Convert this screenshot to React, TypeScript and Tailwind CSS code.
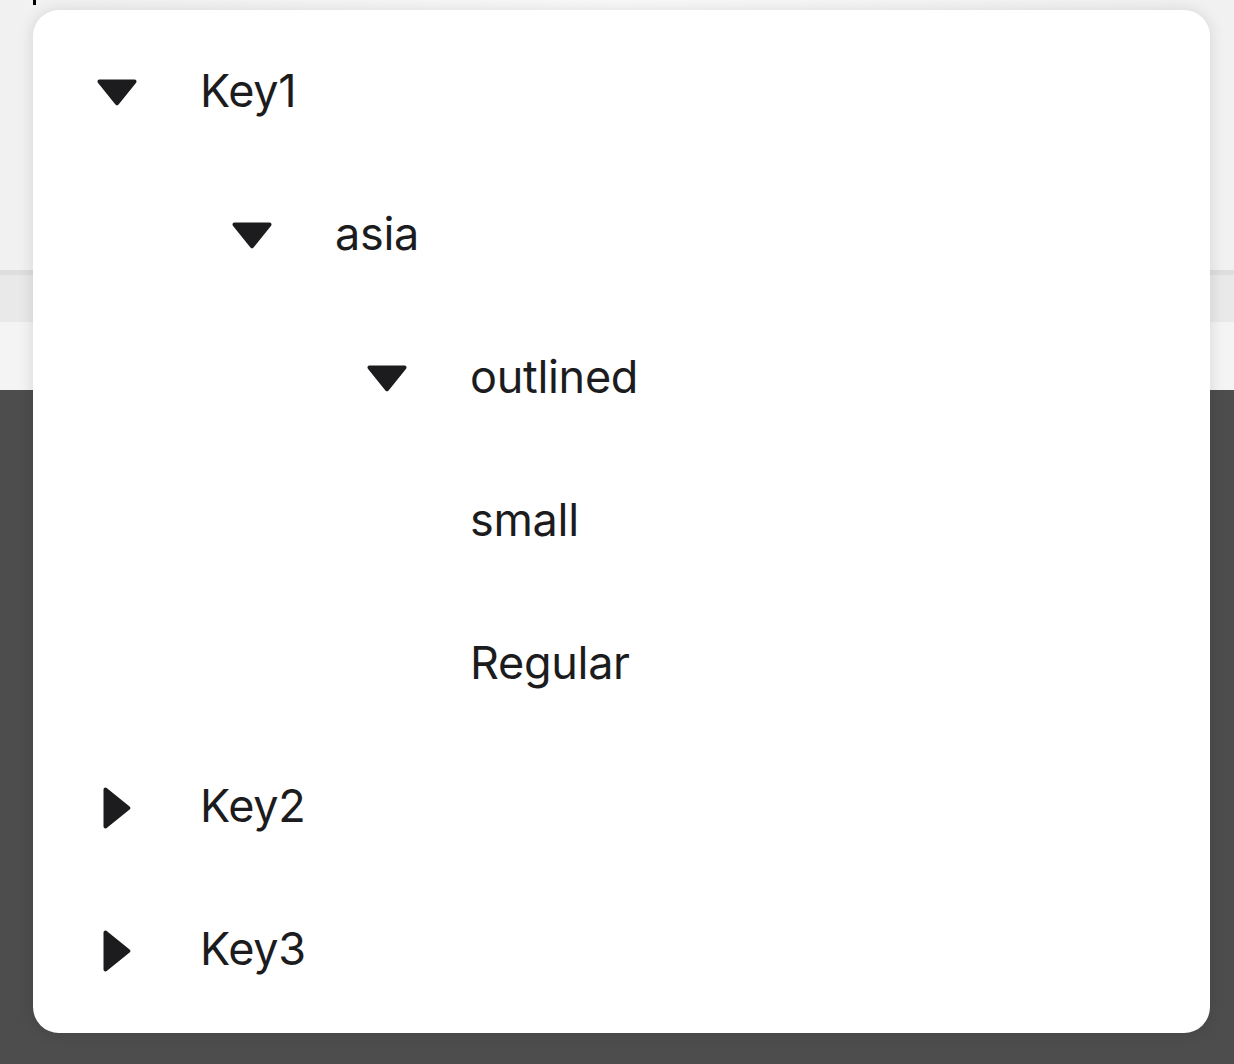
import React from "react";

type Node = { label: string; level: number; state: "open" | "closed" | "leaf" };

const rows: Node[] = [
  { label: "Key1", level: 0, state: "open" },
  { label: "asia", level: 1, state: "open" },
  { label: "outlined", level: 2, state: "open" },
  { label: "small", level: 3, state: "leaf" },
  { label: "Regular", level: 3, state: "leaf" },
  { label: "Key2", level: 0, state: "closed" },
  { label: "Key3", level: 0, state: "closed" },
];

const indent = ["pl-0", "pl-[135px]", "pl-[270px]", "pl-[270px]"];

const Caret = ({ state }: { state: Node["state"] }) => {
  if (state === "leaf") return <div className="w-[40px] h-[40px] shrink-0" />;
  return (
    <div className="w-[40px] h-[42px] shrink-0 flex items-center justify-center">
      {state === "open" ? (
        <svg width="40" height="27" viewBox="0 0 40 27">
          <path d="M2.5 0.5h35a2 2 0 0 1 1.6 3.2L21.6 25.6a2 2 0 0 1-3.2 0L0.9 3.7A2 2 0 0 1 2.5 0.5z" fill="#1c1c1e" />
        </svg>
      ) : (
        <svg width="28" height="42" viewBox="0 0 28 42">
          <path d="M0.5 2.5v37a2 2 0 0 0 3.2 1.6L26.6 22.6a2 2 0 0 0 0-3.2L3.7 0.9A2 2 0 0 0 0.5 2.5z" fill="#1c1c1e" />
        </svg>
      )}
    </div>
  );
};

const App = () => {
  return (
    <div className="relative w-[1234px] h-[1064px] overflow-hidden flex flex-col font-['Inter',sans-serif]">
      <div className="h-[270px] bg-gradient-to-r from-[#f1f1f1] via-[#fafafa] to-[#f1f1f1] relative">
        <div className="absolute left-[33px] top-0 w-[3px] h-[5px] bg-black" />
      </div>
      <div className="h-[5px] bg-[#dedede]" />
      <div className="h-[47px] bg-[#e9e9e9]" />
      <div className="h-[68px] bg-[#f4f4f4]" />
      <div className="flex-1 bg-[#4d4d4d]" />

      <div className="absolute left-[33px] top-[10px] w-[1177px] h-[1023px] bg-white rounded-[26px] shadow-[0_0_16px_rgba(0,0,0,0.12)] py-[11px] pl-[64px]">
        {rows.map((r, i) => (
          <div key={i} className={`h-[143px] flex items-center ${indent[r.level]}`}>
            <Caret state={r.state} />
            <span className="ml-[63px] mb-[4px] text-[45px] leading-none text-[#1c1c1e] tracking-[-0.3px]">
              {r.label}
            </span>
          </div>
        ))}
      </div>
    </div>
  );
};

export default App;
